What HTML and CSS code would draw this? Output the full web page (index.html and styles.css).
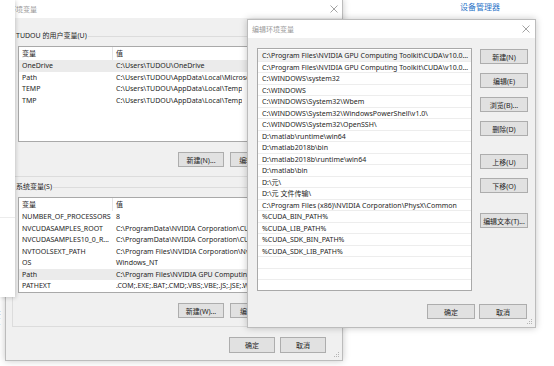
FILE: index.html
```html
<!DOCTYPE html>
<html lang="zh-CN">
<head>
    <meta charset="UTF-8">
    <meta name="viewport" content="width=device-width, initial-scale=1.0">
    <title>编辑环境变量</title>
    <link rel="stylesheet" href="styles.css">
</head>
<body>
    <a class="device-link" href="#">设备管理器</a>

    <div class="behind-text">t<br>[</div>

    <!-- 环境变量 -->
    <section class="window env-window">
        <div class="titlebar">
            <span class="title">环境变量</span>
            <svg class="close" width="8" height="8" viewBox="0 0 8 8"><path d="M0.5 0.5L7.5 7.5M7.5 0.5L0.5 7.5" stroke="#9a9a9a" stroke-width="0.9"/></svg>
        </div>

        <fieldset class="group">
            <legend>TUDOU 的用户变量(U)</legend>
            <div class="var-list">
                <div class="var-head">
                    <span class="col-name">变量</span>
                    <span class="col-value">值</span>
                </div>
                <div class="var-row selected"><span class="col-name">OneDrive</span><span class="col-value">C:\Users\TUDOU\OneDrive</span></div>
                <div class="var-row"><span class="col-name">Path</span><span class="col-value">C:\Users\TUDOU\AppData\Local\Microsoft\WindowsApps;</span></div>
                <div class="var-row"><span class="col-name">TEMP</span><span class="col-value">C:\Users\TUDOU\AppData\Local\Temp</span></div>
                <div class="var-row"><span class="col-name">TMP</span><span class="col-value">C:\Users\TUDOU\AppData\Local\Temp</span></div>
            </div>
            <div class="group-buttons">
                <button class="btn">新建(N)...</button>
                <button class="btn">编辑(E)...</button>
                <button class="btn">删除(D)</button>
            </div>
        </fieldset>

        <fieldset class="group group-sys">
            <legend>系统变量(S)</legend>
            <div class="var-list">
                <div class="var-head">
                    <span class="col-name">变量</span>
                    <span class="col-value">值</span>
                </div>
                <div class="var-row"><span class="col-name">NUMBER_OF_PROCESSORS</span><span class="col-value">8</span></div>
                <div class="var-row"><span class="col-name">NVCUDASAMPLES_ROOT</span><span class="col-value">C:\ProgramData\NVIDIA Corporation\CUDA Samples\v10.0</span></div>
                <div class="var-row"><span class="col-name">NVCUDASAMPLES10_0_R...</span><span class="col-value">C:\ProgramData\NVIDIA Corporation\CUDA Samples\v10.0</span></div>
                <div class="var-row"><span class="col-name">NVTOOLSEXT_PATH</span><span class="col-value">C:\Program Files\NVIDIA Corporation\NvToolsExt\</span></div>
                <div class="var-row"><span class="col-name">OS</span><span class="col-value">Windows_NT</span></div>
                <div class="var-row selected"><span class="col-name">Path</span><span class="col-value">C:\Program Files\NVIDIA GPU Computing Toolkit\CUDA\v10.0\bin</span></div>
                <div class="var-row"><span class="col-name">PATHEXT</span><span class="col-value">.COM;.EXE;.BAT;.CMD;.VBS;.VBE;.JS;.JSE;.WSF;.WSH;.MSC</span></div>
            </div>
            <div class="group-buttons">
                <button class="btn">新建(W)...</button>
                <button class="btn">编辑(I)...</button>
                <button class="btn">删除(L)</button>
            </div>
        </fieldset>

        <div class="dialog-buttons">
            <button class="btn btn-wide">确定</button>
            <button class="btn btn-wide">取消</button>
        </div>
        <svg class="grip" width="6" height="6" viewBox="0 0 6 6" fill="#b5b5b5"><rect x="4" y="0" width="1" height="1"/><rect x="2" y="2" width="1" height="1"/><rect x="4" y="2" width="1" height="1"/><rect x="0" y="4" width="1" height="1"/><rect x="2" y="4" width="1" height="1"/><rect x="4" y="4" width="1" height="1"/></svg>
    </section>

    <div class="side-panel">
        <div class="side-line"></div>
    </div>

    <!-- 编辑环境变量 -->
    <section class="window edit-window">
        <div class="titlebar">
            <span class="title">编辑环境变量</span>
            <svg class="close" width="8" height="8" viewBox="0 0 8 8"><path d="M0.5 0.5L7.5 7.5M7.5 0.5L0.5 7.5" stroke="#9a9a9a" stroke-width="0.9"/></svg>
        </div>
        <div class="edit-body">
            <div class="path-list">
                <div class="path-row selected">C:\Program Files\NVIDIA GPU Computing Toolkit\CUDA\v10.0\bin</div>
                <div class="path-row">C:\Program Files\NVIDIA GPU Computing Toolkit\CUDA\v10.0\libnvvp</div>
                <div class="path-row">C:\WINDOWS\system32</div>
                <div class="path-row">C:\WINDOWS</div>
                <div class="path-row">C:\WINDOWS\System32\Wbem</div>
                <div class="path-row">C:\WINDOWS\System32\WindowsPowerShell\v1.0\</div>
                <div class="path-row">C:\WINDOWS\System32\OpenSSH\</div>
                <div class="path-row">D:\matlab\runtime\win64</div>
                <div class="path-row">D:\matlab2018b\bin</div>
                <div class="path-row">D:\matlab2018b\runtime\win64</div>
                <div class="path-row">D:\matlab\bin</div>
                <div class="path-row">D:\元\</div>
                <div class="path-row">D:\元 文件传输\</div>
                <div class="path-row">C:\Program Files (x86)\NVIDIA Corporation\PhysX\Common</div>
                <div class="path-row">%CUDA_BIN_PATH%</div>
                <div class="path-row">%CUDA_LIB_PATH%</div>
                <div class="path-row">%CUDA_SDK_BIN_PATH%</div>
                <div class="path-row">%CUDA_SDK_LIB_PATH%</div>
                <div class="path-row"></div>
                <div class="path-row"></div>
                <div class="path-row"></div>
            </div>
            <div class="side-buttons">
                <button class="btn btn-side">新建(N)</button>
                <button class="btn btn-side">编辑(E)</button>
                <button class="btn btn-side">浏览(B)...</button>
                <button class="btn btn-side">删除(D)</button>
                <button class="btn btn-side gap-big">上移(U)</button>
                <button class="btn btn-side">下移(O)</button>
                <button class="btn btn-side gap-text">编辑文本(T)...</button>
            </div>
        </div>
        <div class="edit-footer">
            <button class="btn btn-side">确定</button>
            <button class="btn btn-side">取消</button>
        </div>
        <svg class="grip" width="6" height="6" viewBox="0 0 6 6" fill="#b5b5b5"><rect x="4" y="0" width="1" height="1"/><rect x="2" y="2" width="1" height="1"/><rect x="4" y="2" width="1" height="1"/><rect x="0" y="4" width="1" height="1"/><rect x="2" y="4" width="1" height="1"/><rect x="4" y="4" width="1" height="1"/></svg>
    </section>
</body>
</html>
```

FILE: styles.css
```css
* {
    box-sizing: border-box;
}

body {
    margin: 0;
    padding: 0;
    width: 554px;
    height: 366px;
    overflow: hidden;
    position: relative;
    background: #fff;
    font-family: "Noto Sans", "Noto Sans CJK SC", sans-serif;
    font-size: 7px;
    color: #1e1e1e;
}

.device-link {
    position: absolute;
    left: 460px;
    top: 1px;
    font-size: 8px;
    line-height: 11px;
    color: #2b74c8;
    text-decoration: none;
}

.behind-text {
    position: absolute;
    left: -2px;
    top: 309px;
    font-size: 7px;
    line-height: 8px;
    color: #8a8a8a;
}

/* windows */
.window {
    position: absolute;
    background: #f0f0f0;
    border: 1px solid #bcbcbc;
    box-shadow: 0 0 7px rgba(0, 0, 0, 0.22);
}

.titlebar {
    height: 18px;
    background: #fff;
    display: flex;
    align-items: center;
    justify-content: space-between;
}

.title {
    color: #9a9a9a;
    font-size: 7px;
}

.close {
    display: block;
}

.grip {
    position: absolute;
    right: 2px;
    bottom: 2px;
}

.btn {
    font-family: inherit;
    font-size: 7px;
    color: #1e1e1e;
    height: 15px;
    width: 46px;
    padding: 0;
    background: #e1e1e1;
    border: 1px solid #adadad;
    border-radius: 0;
    white-space: nowrap;
}

/* 环境变量 */
.env-window {
    left: 5px;
    top: -1px;
    width: 338px;
    height: 362px;
    z-index: 1;
}

.env-window .titlebar {
    padding: 0 4px 0 3px;
}

.group {
    margin: 13px 8px 0 6px;
    padding: 5px 5px 9px;
    min-width: 0;
    border: 1px solid #dcdcdc;
}

.group legend {
    padding: 0 1px;
    margin-left: -3px;
    font-size: 7px;
    line-height: 10px;
}

.group-sys {
    margin-top: 5px;
    padding-bottom: 8px;
}

.var-list {
    height: 96px;
    background: #fff;
    border: 1px solid #a9a9a9;
    overflow: hidden;
}

.var-head,
.var-row {
    display: flex;
    white-space: nowrap;
}

.var-head {
    height: 13px;
    line-height: 13px;
}

.var-row {
    height: 11.5px;
    line-height: 11.5px;
}

.var-row.selected {
    background: #ebebeb;
}

.col-name {
    width: 94px;
    flex: none;
    padding-left: 3px;
    overflow: hidden;
}

.var-head .col-name {
    border-right: 1px solid #e5e5e5;
}

.col-value {
    padding-left: 3px;
    overflow: hidden;
}

.group-buttons {
    display: flex;
    justify-content: flex-end;
    gap: 6px;
    margin-top: 10px;
}

.dialog-buttons {
    display: flex;
    justify-content: flex-end;
    gap: 5px;
    margin-top: 10px;
    padding-right: 16px;
}

.btn-wide {
    height: 16px;
}

.side-panel {
    position: absolute;
    left: 0;
    top: 0;
    width: 15px;
    height: 297px;
    background: #fff;
    box-shadow: 1px 1px 4px rgba(0, 0, 0, 0.18);
    z-index: 2;
}

.side-line {
    margin-top: 217px;
    height: 1px;
    background: #ececec;
}

/* 编辑环境变量 */
.edit-window {
    left: 247px;
    top: 19px;
    width: 289px;
    height: 309px;
    z-index: 3;
}

.edit-window .titlebar {
    padding: 0 5px 0 4px;
}

.edit-body {
    display: flex;
    gap: 8px;
    padding: 10px 0 0 9px;
}

.path-list {
    width: 215px;
    height: 243px;
    padding-top: 1px;
    background: #fff;
    border: 1px solid #a9a9a9;
    overflow: hidden;
}

.path-row {
    height: 11.5px;
    line-height: 11px;
    padding: 0 2px 0 4px;
    border-bottom: 1px solid #ededed;
    white-space: nowrap;
    overflow: hidden;
    text-overflow: ellipsis;
}

.path-row.selected {
    background: #f2f2f2;
}

.side-buttons {
    display: flex;
    flex-direction: column;
    gap: 9px;
    padding-top: 1px;
}

.btn-side {
    width: 48px;
}

.gap-big {
    margin-top: 9px;
}

.gap-text {
    margin-top: 11px;
}

.edit-footer {
    display: flex;
    justify-content: flex-end;
    gap: 4px;
    margin-top: 13px;
    padding-right: 8px;
}
```
